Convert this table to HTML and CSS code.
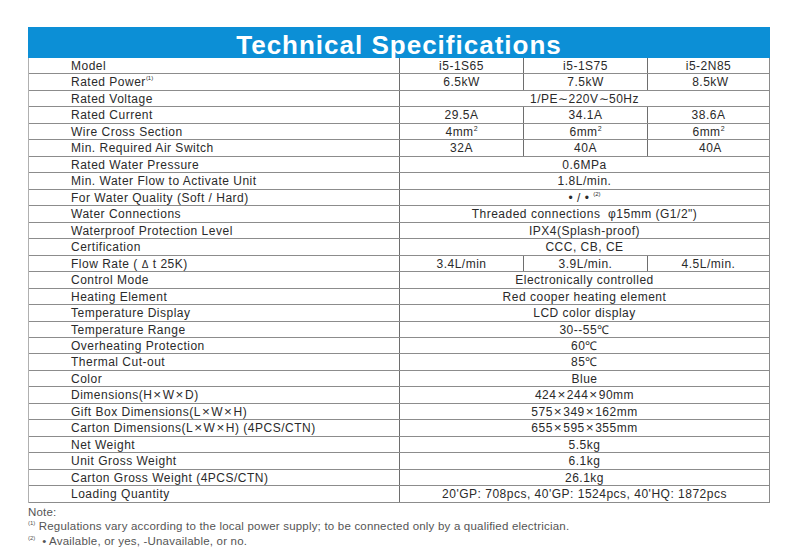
FILE: index.html
```html
<!DOCTYPE html>
<html>
<head>
<meta charset="utf-8">
<link rel="stylesheet" href="styles.css">
</head>
<body>
<div class="page">
  <div class="sheet">
    <div class="title">Technical Specifications</div>
    <div class="rows">
      <div class="row"><div class="lbl">Model</div><div class="v">i5-1S65</div><div class="v">i5-1S75</div><div class="v">i5-2N85</div></div>
      <div class="row"><div class="lbl">Rated Power<sup class="fn">(1)</sup></div><div class="v">6.5kW</div><div class="v">7.5kW</div><div class="v">&nbsp;8.5kW</div></div>
      <div class="row"><div class="lbl">Rated Voltage</div><div class="v span">1/PE∼220V∼50Hz</div></div>
      <div class="row"><div class="lbl">Rated Current</div><div class="v">29.5A</div><div class="v">34.1A</div><div class="v">38.6A</div></div>
      <div class="row"><div class="lbl">Wire Cross Section</div><div class="v">4mm<sup class="sq">2</sup></div><div class="v">6mm<sup class="sq">2</sup></div><div class="v">6mm<sup class="sq">2</sup></div></div>
      <div class="row"><div class="lbl">Min. Required Air Switch</div><div class="v">32A</div><div class="v">40A</div><div class="v">&nbsp;40A</div></div>
      <div class="row"><div class="lbl">Rated Water Pressure</div><div class="v span">0.6MPa</div></div>
      <div class="row"><div class="lbl">Min. Water Flow to Activate Unit</div><div class="v span">1.8L/min.</div></div>
      <div class="row"><div class="lbl">For Water Quality (Soft / Hard)</div><div class="v span">• / • <sup class="fn">(2)</sup></div></div>
      <div class="row"><div class="lbl">Water Connections</div><div class="v span">Threaded connections &nbsp;φ15mm (G1/2")</div></div>
      <div class="row"><div class="lbl">Waterproof Protection Level</div><div class="v span">IPX4(Splash-proof)</div></div>
      <div class="row"><div class="lbl">Certification</div><div class="v span">CCC, CB, CE</div></div>
      <div class="row"><div class="lbl">Flow Rate ( <span class="d">Δ</span> t 25K)</div><div class="v">3.4L/min</div><div class="v">3.9L/min.</div><div class="v">4.5L/min.</div></div>
      <div class="row"><div class="lbl">Control Mode</div><div class="v span">Electronically controlled</div></div>
      <div class="row"><div class="lbl">Heating Element</div><div class="v span">Red cooper heating element</div></div>
      <div class="row"><div class="lbl">Temperature Display</div><div class="v span">LCD color display</div></div>
      <div class="row"><div class="lbl">Temperature Range</div><div class="v span">30--55℃</div></div>
      <div class="row"><div class="lbl">Overheating Protection</div><div class="v span">60℃</div></div>
      <div class="row"><div class="lbl">Thermal Cut-out</div><div class="v span">85℃</div></div>
      <div class="row"><div class="lbl">Color</div><div class="v span">Blue</div></div>
      <div class="row"><div class="lbl">Dimensions(H<span class="x">×</span>W<span class="x">×</span>D)</div><div class="v span">424<span class="x">×</span>244<span class="x">×</span>90mm</div></div>
      <div class="row"><div class="lbl">Gift Box Dimensions(L<span class="x">×</span>W<span class="x">×</span>H)</div><div class="v span">575<span class="x">×</span>349<span class="x">×</span>162mm</div></div>
      <div class="row"><div class="lbl">Carton Dimensions(L<span class="x">×</span>W<span class="x">×</span>H) (4PCS/CTN)</div><div class="v span">655<span class="x">×</span>595<span class="x">×</span>355mm</div></div>
      <div class="row"><div class="lbl">Net Weight</div><div class="v span">5.5kg</div></div>
      <div class="row"><div class="lbl">Unit Gross Weight</div><div class="v span">6.1kg</div></div>
      <div class="row"><div class="lbl">Carton Gross Weight (4PCS/CTN)</div><div class="v span">26.1kg</div></div>
      <div class="row"><div class="lbl">Loading Quantity</div><div class="v span">20'GP: 708pcs, 40'GP: 1524pcs, 40'HQ: 1872pcs</div></div>
    </div>
  </div>
  <div class="notes">
    <div class="note">Note:</div>
    <div class="note"><sup class="nfn">(1)</sup> Regulations vary according to the local power supply; to be connected only by a qualified electrician.</div>
    <div class="note"><sup class="nfn">(2)</sup> &nbsp;• Available, or yes, -Unavailable, or no.</div>
  </div>
</div>
</body>
</html>
```

FILE: styles.css
```css
html, body {
  margin: 0;
  padding: 0;
  background: #ffffff;
}

.page {
  padding: 27px 0 0 28px;
  font-family: "Liberation Sans", Arial, sans-serif;
  color: #2a2a2a;
}

.sheet {
  width: 742px;
}

.title {
  height: 31px;
  background: #0c8fd6;
  color: #ffffff;
  font-weight: bold;
  font-size: 26px;
  letter-spacing: 1px;
  line-height: 36px;
  text-align: center;
  box-sizing: border-box;
}

.rows {
  border-left: 1px solid #b0b0b0;
  border-right: 1px solid #8a8a8a;
  box-sizing: border-box;
}

.row {
  display: grid;
  grid-template-columns: 370px 124px 124px 1fr;
  height: 16.48px;
  box-sizing: border-box;
  border-bottom: 1px solid #8c8c8c;
  font-size: 12px;
  letter-spacing: 0.5px;
  line-height: 17.5px;
}

.lbl {
  padding-left: 42px;
  white-space: nowrap;
  height: 15.48px;
}

.v {
  border-left: 1px solid #6e6e6e;
  text-align: center;
  white-space: nowrap;
  height: 15.48px;
}

.v.span {
  grid-column: 2 / -1;
}

.x {
  font-size: 13.5px;
  margin: 0 1px;
  line-height: 0;
}

.d {
  font-size: 10px;
  line-height: 0;
}

.fn {
  font-size: 6px;
  vertical-align: 6px;
  line-height: 0;
  letter-spacing: 0;
}

.sq {
  font-size: 7px;
  vertical-align: 5px;
  line-height: 0;
  letter-spacing: 0;
}

.notes {
  margin-top: 2px;
  color: #555555;
  font-size: 11.5px;
  letter-spacing: 0.2px;
}

.note {
  line-height: 14.5px;
  white-space: nowrap;
}

.nfn {
  font-size: 6px;
  vertical-align: 5px;
  line-height: 0;
  letter-spacing: 0;
}
```
